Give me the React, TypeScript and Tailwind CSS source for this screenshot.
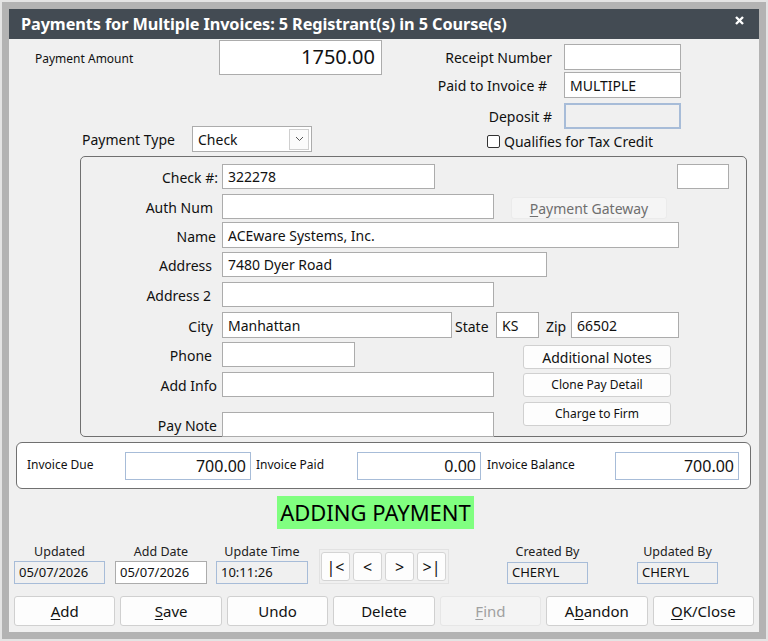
import React from "react";

const font = "font-['Noto_Sans','Open_Sans',sans-serif]";
const box = "bg-white border border-[#acacac] flex items-center px-[5px] text-[14px] text-[#111] whitespace-nowrap overflow-hidden";
const blueBox = "border border-[#a7bcd8] flex items-center px-[4px] whitespace-nowrap";

const U = ({ children }: { children: React.ReactNode }) => (
  <span className="underline underline-offset-2">{children}</span>
);

const FieldRow = ({
  label,
  pr,
  value,
  w,
  h = 25,
  mt,
  children,
}: {
  label: string;
  pr: string;
  value?: string;
  w: string;
  h?: number;
  mt: string;
  children?: React.ReactNode;
}) => (
  <div className={`flex items-start ${mt}`}>
    <div
      className={`w-[137px] ${pr} pt-[2px] text-right text-[14px] text-[#111] flex items-center justify-end ${
        h === 26 ? "h-[26px]" : "h-[25px]"
      }`}
    >
      {label}
    </div>
    <div className={`${box} ${w} ml-[4px] ${h === 26 ? "h-[26px]" : "h-[25px]"}`}>{value}</div>
    {children}
  </div>
);

const SideButton = ({ label, size, mt }: { label: string; size: string; mt: string }) => (
  <div
    className={`w-[148px] h-[24px] ${mt} bg-[#fdfdfd] border border-[#d0d0d0] rounded-[3px] flex items-center justify-center ${size} text-[#111]`}
  >
    {label}
  </div>
);

const InvoiceField = ({ value, w }: { value: string; w: string }) => (
  <div className={`${w} h-[28px] mt-[9px] bg-white ${blueBox} justify-end pr-[4px] text-[16px] text-[#111]`}>
    {value}
  </div>
);

const InfoField = ({
  label,
  value,
  w,
  ml,
  gray,
  h = "h-[23px]",
  mt = "mt-[2px]",
}: {
  label: string;
  value: string;
  w: string;
  ml: string;
  gray?: boolean;
  h?: string;
  mt?: string;
}) => (
  <div className={`flex flex-col items-center ${w} ${ml}`}>
    <div className="h-[16px] leading-[16px] text-[12.5px] text-[#222] mt-[1px] -mb-[1px]">{label}</div>
    <div
      className={`w-full ${h} ${mt} ${
        gray ? `bg-[#f0f0f0] ${blueBox}` : "bg-white border border-[#acacac] flex items-center px-[4px]"
      } text-[13px] text-[#111]`}
    >
      {value}
    </div>
  </div>
);

const NavButton = ({ label }: { label: string }) => (
  <div className="w-[29px] h-[29px] bg-[#fdfdfd] border border-[#d4d4d4] rounded-[3px] flex items-center justify-center text-[16px] text-[#111]">
    {label}
  </div>
);

const BottomButton = ({ children, disabled }: { children: React.ReactNode; disabled?: boolean }) => (
  <div
    className={`h-[30px] rounded-[3px] border flex items-center justify-center text-[15px] ${
      disabled ? "bg-[#f4f4f4] border-[#e6e6e6] text-[#a0a0a0]" : "bg-[#fdfdfd] border-[#d0d0d0] text-[#111]"
    }`}
  >
    {children}
  </div>
);

export default function App() {
  return (
    <div className={`w-[768px] h-[641px] border-2 border-[#e4e4e4] ${font}`}>
      <div className="h-full border-[7px] border-[#b3b3b3] flex flex-col">
        {/* title bar */}
        <div className="h-[30px] bg-[#434b53] flex items-center pl-[12px] shrink-0">
          <span className="text-white font-bold text-[16.3px] tracking-[-0.1px]">
            Payments for Multiple Invoices: 5 Registrant(s) in 5 Course(s)
          </span>
          <svg className="ml-auto mr-[15px] mb-[7px]" width="9" height="9" viewBox="0 0 9 9">
            <path d="M1 1 L8 8 M8 1 L1 8" stroke="white" strokeWidth="2.4" />
          </svg>
        </div>

        <div className="flex-1 bg-[#f0f0f0] flex flex-col">
          {/* top section */}
          <div className="flex h-[117px]">
            <div className="w-[410px] flex flex-col">
              <div className="flex items-center mt-[1px] h-[34px]">
                <div className="ml-[26px] w-[184px] pt-[3px] text-[12px] text-[#111]">Payment Amount</div>
                <div className="w-[163px] h-[35px] bg-white border border-[#acacac] flex items-center justify-end pr-[6px] text-[20px] text-[#111]">
                  1750.00
                </div>
              </div>
              <div className="flex items-center mt-[52px] h-[26px]">
                <div className="ml-[73px] w-[110px] pt-[1px] text-[14px] text-[#111]">Payment Type</div>
                <div className="w-[120px] h-[26px] bg-white border border-[#acacac] flex items-center pl-[5px] pr-[2px] text-[14px] text-[#111]">
                  <span>Check</span>
                  <div className="ml-auto w-[20px] h-[21px] border border-[#cfcfcf] bg-[#fbfbfb] flex items-center justify-center">
                    <svg width="9" height="6" viewBox="0 0 9 6">
                      <path d="M1 1 L4.5 4.5 L8 1" stroke="#555" strokeWidth="1" fill="none" />
                    </svg>
                  </div>
                </div>
              </div>
            </div>

            <div className="flex flex-col">
              <div className="flex items-center mt-[5px] h-[26px]">
                <div className="w-[133px] text-right text-[14px] text-[#111]">Receipt Number</div>
                <div className={`${box} ml-[12px] w-[117px] h-[26px]`}></div>
              </div>
              <div className="flex items-center mt-[2px] h-[26px]">
                <div className="w-[133px] pr-[5px] text-right text-[14px] text-[#111]">Paid to Invoice #</div>
                <div className={`${box} ml-[12px] w-[117px] h-[26px]`}>MULTIPLE</div>
              </div>
              <div className="flex items-center mt-[5px] h-[26px]">
                <div className="w-[133px] text-right text-[14px] text-[#111]">Deposit #</div>
                <div className={`bg-[#f0f0f0] ${blueBox} border-2 ml-[12px] w-[117px] h-[26px]`}></div>
              </div>
              <div className="flex items-center mt-[3px] h-[18px] ml-[68px]">
                <div className="w-[13px] h-[13px] bg-white border border-[#333] rounded-[2px]"></div>
                <span className="ml-[4px] text-[14px] text-[#111]">Qualifies for Tax Credit</span>
              </div>
            </div>
          </div>

          {/* payment detail group */}
          <div className="ml-[71px] w-[667px] h-[281px] border border-[#707070] rounded-[5px] flex flex-col">
            <FieldRow label="Check #:" pr="pr-0" value="322278" w="w-[213px]" mt="mt-[7px]">
              <div className={`${box} ml-[242px] w-[52px] h-[25px]`}></div>
            </FieldRow>
            <FieldRow label="Auth Num" pr="pr-[5px]" w="w-[272px]" mt="mt-[5px]">
              <div className="ml-[17px] mt-[3px] w-[156px] h-[22px] bg-[#f5f5f5] border border-[#ebebeb] rounded-[3px] flex items-center justify-center text-[14px] text-[#6f6f6f]">
                <U>P</U>ayment Gateway
              </div>
            </FieldRow>
            <FieldRow label="Name" pr="pr-[2px]" value="ACEware Systems, Inc." w="w-[457px]" h={26} mt="mt-[3px]" />
            <FieldRow label="Address" pr="pr-[6px]" value="7480 Dyer Road" w="w-[325px]" mt="mt-[4px]" />
            <FieldRow label="Address 2" pr="pr-[7px]" w="w-[272px]" mt="mt-[5px]" />
            <FieldRow label="City" pr="pr-[5px]" value="Manhattan" w="w-[230px]" h={26} mt="mt-[5px]">
              <div className="ml-[3px] w-[34px] h-[26px] pt-[2px] flex items-center text-[14px] text-[#111]">State</div>
              <div className={`${box} ml-[7px] w-[43px] h-[26px]`}>KS</div>
              <div className="ml-[7px] w-[21px] h-[26px] pt-[2px] flex items-center text-[14px] text-[#111]">Zip</div>
              <div className={`${box} ml-[4px] w-[108px] h-[26px]`}>66502</div>
            </FieldRow>

            <div className="flex mt-[4px]">
              <div className="w-[442px] flex flex-col">
                <FieldRow label="Phone" pr="pr-[6px]" w="w-[133px]" mt="mt-0" />
                <FieldRow label="Add Info" pr="pr-[1px]" w="w-[272px]" mt="mt-[5px]" />
                <FieldRow label="Pay Note" pr="pr-[1px]" w="w-[272px]" mt="mt-[15px]" />
              </div>
              <div className="flex flex-col">
                <SideButton label="Additional Notes" size="text-[14px]" mt="mt-[3px]" />
                <SideButton label="Clone Pay Detail" size="text-[12px]" mt="mt-[4px]" />
                <SideButton label="Charge to Firm" size="text-[12px]" mt="mt-[5px]" />
              </div>
            </div>
          </div>

          {/* invoice totals */}
          <div className="ml-[7px] mt-[5px] w-[735px] h-[47px] bg-white border border-[#707070] rounded-[6px] flex items-start pl-[10px]">
            <div className="w-[98px] mt-[13px] text-[12px] text-[#111]">Invoice Due</div>
            <InvoiceField value="700.00" w="w-[126px]" />
            <div className="ml-[5px] w-[101px] mt-[13px] text-[12px] text-[#111]">Invoice Paid</div>
            <InvoiceField value="0.00" w="w-[124px]" />
            <div className="ml-[6px] w-[128px] mt-[13px] text-[12px] text-[#111]">Invoice Balance</div>
            <InvoiceField value="700.00" w="w-[124px]" />
          </div>

          <div className="ml-[268px] mt-[7px] w-[197px] h-[33px] bg-[#80ff80] flex items-center justify-center text-[22px] text-black">
            ADDING PAYMENT
          </div>

          {/* record info */}
          <div className="flex items-start mt-[14px] pl-[5px]">
            <InfoField label="Updated" value="05/07/2026" w="w-[91px]" ml="ml-0" gray />
            <InfoField label="Add Date" value="05/07/2026" w="w-[92px]" ml="ml-[10px]" />
            <InfoField label="Update Time" value="10:11:26" w="w-[92px]" ml="ml-[9px]" gray />
            <div className="ml-[11px] mt-[6px] w-[130px] h-[35px] border border-[#e2e2e2] flex items-center gap-[3px] pl-[1px]">
              <NavButton label="|<" />
              <NavButton label="<" />
              <NavButton label=">" />
              <NavButton label=">|" />
            </div>
            <InfoField label="Created By" value="CHERYL" w="w-[81px]" ml="ml-[58px]" gray h="h-[22px]" mt="mt-[3px]" />
            <InfoField label="Updated By" value="CHERYL" w="w-[81px]" ml="ml-[49px]" gray h="h-[22px]" mt="mt-[3px]" />
          </div>

          {/* action buttons */}
          <div className="grid grid-cols-7 gap-[5px] w-[745px] pl-[5px] mt-[12px]">
            <BottomButton>
              <U>A</U>dd
            </BottomButton>
            <BottomButton>
              <U>S</U>ave
            </BottomButton>
            <BottomButton>Undo</BottomButton>
            <BottomButton>Delete</BottomButton>
            <BottomButton disabled>
              <U>F</U>ind
            </BottomButton>
            <BottomButton>
              A<U>b</U>andon
            </BottomButton>
            <BottomButton>
              <U>O</U>K/Close
            </BottomButton>
          </div>
        </div>
      </div>
    </div>
  );
}
